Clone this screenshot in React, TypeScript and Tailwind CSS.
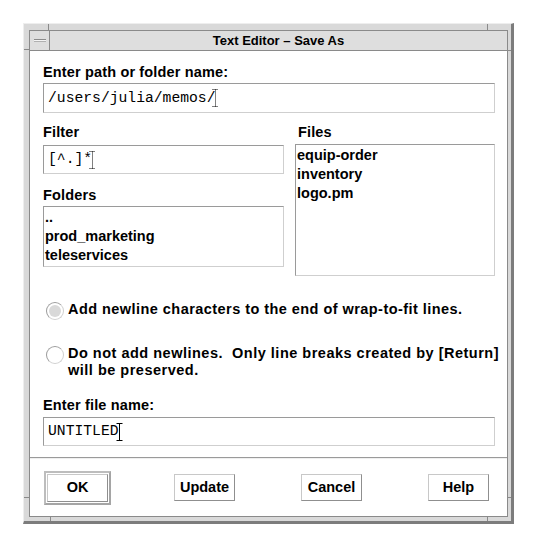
import React from "react";

function IBeam({ dotted, className }: { dotted?: boolean; className?: string }) {
  return (
    <svg width="7" height="18" viewBox="0 0 7 18" className={className}>
      <path
        d="M0.5 0.5 H6.5 M3.5 0.5 V17.5 M0.5 17.5 H6.5"
        stroke="#000"
        strokeWidth="1"
        strokeDasharray={dotted ? "1 1" : undefined}
        fill="none"
      />
    </svg>
  );
}

function TextInput({ value, h, dotted }: { value: string; h: string; dotted?: boolean }) {
  return (
    <div
      className={`${h} border border-t-[#9a9a9a] border-l-[#9a9a9a] border-r-[#cfcfcf] border-b-[#cfcfcf] bg-white flex items-center pl-[4px] font-['Liberation_Mono',monospace] text-[14.7px] leading-none font-normal`}
    >
      <span className="whitespace-pre">{value}</span>
      <IBeam dotted={dotted} className="-ml-[3px]" />
    </div>
  );
}

function Label({ children, className = "" }: { children: React.ReactNode; className?: string }) {
  return (
    <div className={`text-[14.5px] leading-[17px] font-bold tracking-[0.15px] ${className}`}>{children}</div>
  );
}

function ListBox({ items, h }: { items: string[]; h: string }) {
  return (
    <div
      className={`${h} border border-t-[#9a9a9a] border-l-[#9a9a9a] border-r-[#cfcfcf] border-b-[#cfcfcf] bg-white pl-[1px] pt-px text-[14.5px] leading-[19px] font-bold`}
    >
      {items.map((it) => (
        <div key={it}>{it}</div>
      ))}
    </div>
  );
}

function Radio({ selected }: { selected?: boolean }) {
  return (
    <div className="w-[18px] h-[18px] shrink-0 rounded-full border border-t-[#9c9c9c] border-l-[#9c9c9c] border-r-[#d0d0d0] border-b-[#d0d0d0] bg-white flex items-center justify-center mt-px ml-[3px] mr-[4px]">
      {selected && <div className="w-[12px] h-[12px] rounded-full bg-[#d9d9d9]" />}
    </div>
  );
}

function Button({ label, className = "" }: { label: string; className?: string }) {
  return (
    <div
      className={`w-[61px] h-[27px] border border-t-[#c8c8c8] border-l-[#c8c8c8] border-r-[#8f8f8f] border-b-[#8f8f8f] bg-white flex items-center justify-center text-[14.5px] font-bold ${className}`}
    >
      {label}
    </div>
  );
}

export default function App() {
  return (
    <div className="w-[537px] h-[547px] bg-white font-['Liberation_Sans',Arial,sans-serif] text-black pt-[23px] pl-[23px]">
      <div className="relative w-[491px] h-[501px] bg-[#d9d9d9] border-t border-l border-t-[#eeeeee] border-l-[#eeeeee] border-r-[3px] border-b-[3px] border-r-[#7c7c7c] border-b-[#7c7c7c] pt-[6px] pl-[5px] pr-[3px] pb-[4px]">
        {/* resize ticks */}
        <span className="absolute left-[24px] top-0 w-px h-[6px] bg-[#8a8a8a]" />
        <span className="absolute left-[463px] top-0 w-px h-[6px] bg-[#8a8a8a]" />
        <span className="absolute left-0 top-[25px] w-[5px] h-px bg-[#8a8a8a]" />
        <span className="absolute right-0 top-[26px] w-[3px] h-px bg-[#8a8a8a]" />
        <span className="absolute left-0 top-[473px] w-[5px] h-px bg-[#8a8a8a]" />
        <span className="absolute right-0 top-[473px] w-[3px] h-px bg-[#8a8a8a]" />
        <span className="absolute left-[26px] bottom-0 w-px h-[4px] bg-[#8a8a8a]" />
        <span className="absolute left-[463px] bottom-0 w-px h-[4px] bg-[#8a8a8a]" />

        <div className="h-full bg-white border border-[#8a8a8a] flex flex-col">
          {/* title bar */}
          <div className="h-[20px] shrink-0 bg-[#dedede] border-b border-[#8a8a8a] flex">
            <div className="w-[20px] h-full border-r border-[#8a8a8a] flex items-center justify-center">
              <div className="w-[12px] h-[3px] border-t border-[#8a8a8a] bg-[#f4f4f4] border-b border-b-[#b0b0b0]" />
            </div>
            <div className="flex-1 text-center text-[13px] leading-[19px] font-bold">
              Text Editor – Save As
            </div>
          </div>

          {/* body */}
          <div className="pt-[13px] pl-[13px] pr-[12px] flex flex-col">
            <Label>Enter path or folder name:</Label>
            <div className="mt-[2px]">
              <TextInput value="/users/julia/memos/" h="h-[30px]" dotted />
            </div>

            <div className="mt-[11px] flex gap-[11px] items-start">
              <div className="w-[241px] flex flex-col">
                <Label>Filter</Label>
                <div className="mt-[4px]">
                  <TextInput value="[^.]*" h="h-[29px]" dotted />
                </div>
                <Label className="mt-[13px]">Folders</Label>
                <div className="mt-[2px]">
                  <ListBox items={["..", "prod_marketing", "teleservices"]} h="h-[61px]" />
                </div>
              </div>
              <div className="flex-1 flex flex-col">
                <Label className="pl-[3px]">Files</Label>
                <div className="mt-[3px]">
                  <ListBox items={["equip-order", "inventory", "logo.pm"]} h="h-[132px]" />
                </div>
              </div>
            </div>

            <div className="mt-[25px] flex items-start">
              <Radio selected />
              <div className="text-[14.5px] leading-[17px] font-bold tracking-[0.45px]">
                Add newline characters to the end of wrap-to-fit lines.
              </div>
            </div>

            <div className="mt-[25px] flex items-start">
              <Radio />
              <div className="text-[14.5px] leading-[17px] font-bold whitespace-pre tracking-[0.5px]">
                {"Do not add newlines.  Only line breaks created by [Return]\nwill be preserved."}
              </div>
            </div>

            <Label className="mt-[18px]">Enter file name:</Label>
            <div className="mt-[3px]">
              <TextInput value="UNTITLED" h="h-[29px]" />
            </div>
          </div>

          {/* separator */}
          <div className="mt-[11px] h-[2px] shrink-0 border-t border-[#9a9a9a] border-b border-b-[#efefef]" />

          {/* buttons */}
          <div className="flex-1 flex items-center pl-[14px]">
            <div className="w-[67px] h-[34px] border-2 border-t-[#bdbdbd] border-l-[#bdbdbd] border-r-[#a5a5a5] border-b-[#a5a5a5] p-px flex items-center justify-center">
              <div className="w-[61px] h-[28px] border border-t-[#c8c8c8] border-l-[#c8c8c8] border-r-[#8f8f8f] border-b-[#8f8f8f] bg-white flex items-center justify-center text-[14.5px] font-bold">
                OK
              </div>
            </div>
            <Button label="Update" className="ml-[63px]" />
            <Button label="Cancel" className="ml-[66px]" />
            <Button label="Help" className="ml-[66px]" />
          </div>
        </div>
      </div>
    </div>
  );
}
